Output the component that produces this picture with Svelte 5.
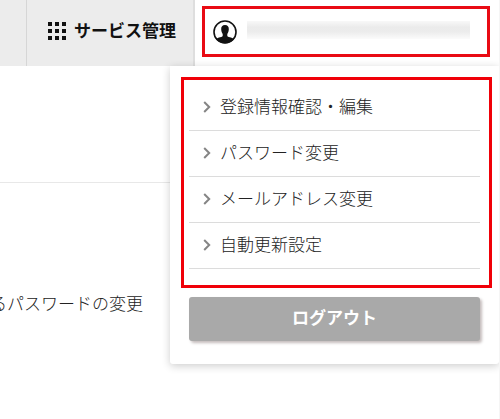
<script lang="ts">
	const items = ['登録情報確認・編集', 'パスワード変更', 'メールアドレス変更', '自動更新設定'];
	const dots = [0, 7, 14];
</script>

<div class="page">
	<header>
		<div class="spacer"></div>
		<div class="service">
			<svg width="18" height="18" viewBox="0 0 18 18" aria-hidden="true">
				{#each dots as y}
					{#each dots as x}
						<rect {x} {y} width="4" height="4" />
					{/each}
				{/each}
			</svg>
			<span>サービス管理</span>
		</div>
		<div class="account">
			<div class="user">
				<svg width="24" height="24" viewBox="0 0 24 24" aria-hidden="true">
					<circle cx="12" cy="12" r="11" fill="#fff" stroke="#111" stroke-width="1.6" />
					<path
						d="M12 5c-2.600 0-4 1.700-3.800 4.300.1 2.100.7 3.700 1.500 4.700v2c0 1-4.700 1.200-6.700 3.300C5.300 22 8.500 23.300 12 23.300s6.700-1.300 9-4c-2-2.100-6.700-2.300-6.700-3.300v-2c.8-1 1.400-2.600 1.500-4.700C16 6.700 14.600 5 12 5z"
						fill="#111"
					/>
				</svg>
				<span class="masked"></span>
			</div>
		</div>
	</header>

	<main>
		<hr />
		<p>るパスワードの変更</p>
	</main>

	<nav class="menu">
		<ul>
			{#each items as item}
				<li>
					<svg width="8" height="12" viewBox="0 0 8 12" aria-hidden="true">
						<path d="M1.200 1l5 5-5 5" />
					</svg>
					<span>{item}</span>
				</li>
			{/each}
		</ul>
		<button>ログアウト</button>
	</nav>
</div>

<style>
	:global(body) {
		background: #fff;
	}
	.page {
		position: relative;
		width: 500px;
		height: 419px;
		overflow: hidden;
		box-sizing: border-box;
		border-right: 1px solid #f5f5f5;
		font-family: 'Noto Sans CJK JP', sans-serif;
		font-size: 17px;
		line-height: 24px;
		color: #222;
	}
	header {
		display: flex;
		height: 66px;
	}
	.spacer {
		width: 26px;
		background: #ececec;
	}
	.service {
		box-sizing: border-box;
		width: 169px;
		display: flex;
		align-items: center;
		gap: 8px;
		padding: 0 0 4px 21px;
		background: #ececec;
		border-left: 1px solid #d6d6d6;
		border-right: 2px solid #dedede;
		font-weight: 700;
		color: #111;
		white-space: nowrap;
	}
	.service span {
		margin-top: -2px;
	}
	.service svg {
		fill: #111;
	}
	.account {
		flex: 1;
		padding: 6px 9px 9px 7px;
	}
	.user {
		box-sizing: border-box;
		height: 51px;
		display: flex;
		align-items: center;
		gap: 10px;
		padding: 0 17px 0 8px;
		border: 3px solid #e90b14;
	}
	.masked {
		flex: 1;
		height: 18px;
		margin-bottom: 4px;
		background: linear-gradient(#f8f8f8, #ebebeb 35%, #ececec 60%, #fbfbfb);
	}
	main {
		padding-top: 116px;
	}
	hr {
		margin: 0;
		border: 0;
		border-top: 1px solid #e8e8e8;
	}
	p {
		margin: 108px 0 0 -10px;
		font-weight: 300;
	}
	.menu {
		position: absolute;
		top: 66px;
		left: 170px;
		box-sizing: border-box;
		width: 329px;
		height: 298px;
		padding: 11px 7px 0 11px;
		background: #fff;
		border-radius: 0 0 3px 3px;
		box-shadow: 0 2px 8px rgba(0, 0, 0, 0.2);
	}
	ul {
		box-sizing: border-box;
		height: 211px;
		margin: 0;
		padding: 5px 9px 0 5px;
		border: 3px solid #f00008;
		list-style: none;
	}
	li {
		box-sizing: border-box;
		height: 46px;
		display: flex;
		align-items: center;
		gap: 9px;
		padding: 0 0 2px 14px;
		border-bottom: 1px solid #dcdcdc;
		font-weight: 300;
	}
	li span {
		margin-top: -2px;
	}
	li svg {
		fill: none;
		stroke: #858585;
		stroke-width: 2;
	}
	button {
		display: block;
		width: 291px;
		height: 44px;
		margin: 9px 0 0 8px;
		padding: 0 0 4px;
		border: 0;
		border-radius: 3px;
		background: #a9a9a9;
		box-shadow: 2px 2px 3px #c4bcbc;
		color: #fff;
		font: inherit;
		font-weight: 700;
	}
</style>
